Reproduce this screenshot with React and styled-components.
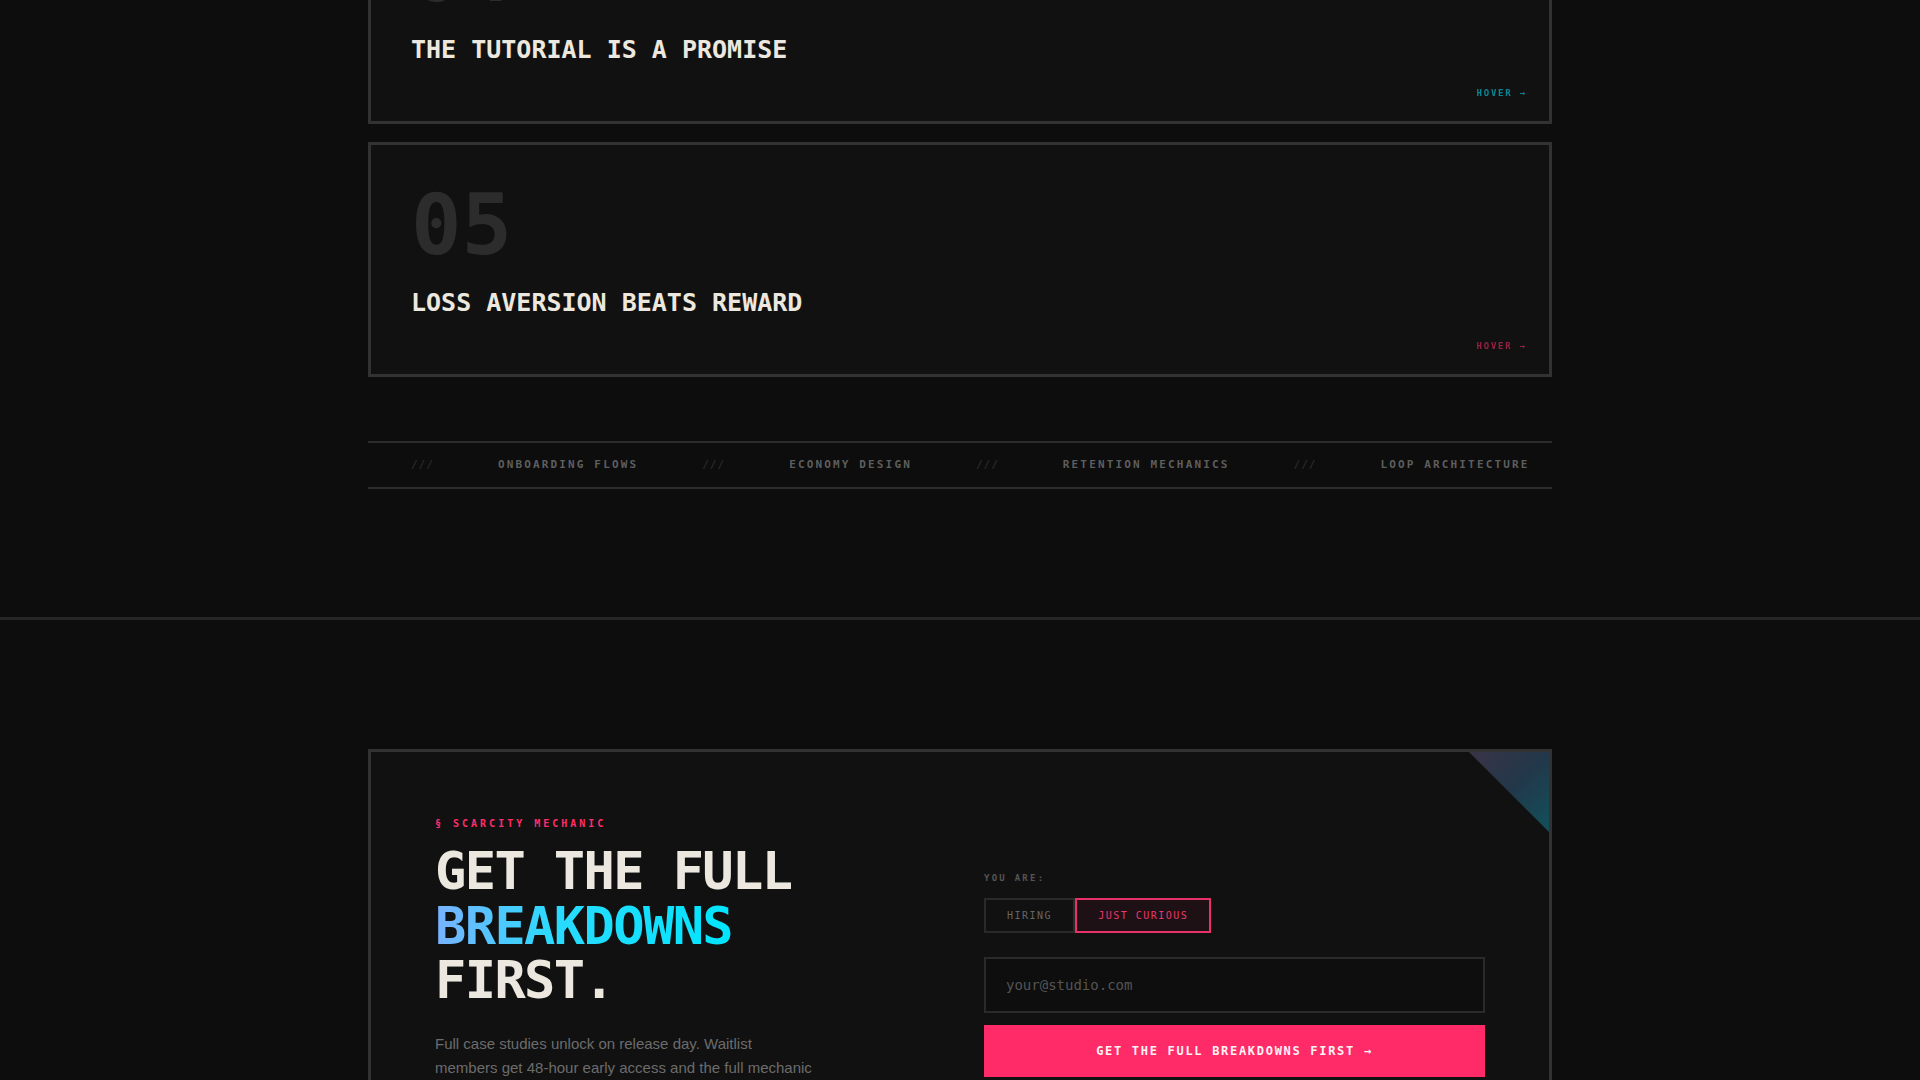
import React, { useState } from "react";
import styled, { createGlobalStyle } from "styled-components";

const mono = `"DejaVu Sans Mono", "Liberation Mono", monospace`;
const sans = `"Liberation Sans", Arial, sans-serif`;

const accents = {
  teal: "#00e5ff",
  pink: "#ff2d6b",
};

const GlobalStyle = createGlobalStyle`
  * { box-sizing: border-box; }
  html, body { margin: 0; padding: 0; background: #0d0d0d; }
  body { font-family: ${mono}; color: #ece8df; }
`;

const Viewport = styled.div`
  height: 100vh;
  overflow: hidden;
`;

/* the page is shown scrolled down a little */
const Scrolled = styled.div`
  margin-top: -111px;
`;

const Section = styled.section`
  padding: 0 0 128px;
`;

const CtaSection = styled.section`
  border-top: 3px solid #262626;
  padding: 129px 0;
`;

const Container = styled.div`
  max-width: 1184px;
  margin: 0 auto;
`;

const CardList = styled.div`
  display: flex;
  flex-direction: column;
  gap: 18px;
`;

const LessonCard = styled.article`
  position: relative;
  background: #111111;
  border: 3px solid #323232;
  padding: 38px 40px 56px;
`;

const Num = styled.div`
  font-family: ${mono};
  font-size: 84px;
  line-height: 1;
  font-weight: 700;
  color: #2c2c2c;
`;

const CardTitle = styled.h3`
  margin: 21px 0 0;
  font-family: ${mono};
  font-size: 25px;
  line-height: 30px;
  font-weight: 700;
  color: #ece8df;
`;

const HoverTag = styled.span`
  position: absolute;
  right: 22px;
  bottom: 22px;
  font-size: 9px;
  line-height: 11px;
  font-weight: 700;
  letter-spacing: 0.2em;
  color: ${({ $accent }) => accents[$accent]};
  opacity: 0.55;
`;

const Ticker = styled.div`
  margin-top: 64px;
  border-top: 2px solid #2c2c2c;
  border-bottom: 2px solid #2c2c2c;
  padding: 14px 0 14px 43px;
  overflow: hidden;
`;

const Track = styled.div`
  display: flex;
  gap: 64px;
  white-space: nowrap;
`;

const TickSep = styled.span`
  font-size: 11px;
  line-height: 16px;
  letter-spacing: 1px;
  color: #2a2a2a;
  font-weight: 700;
`;

const TickLabel = styled.span`
  font-size: 11px;
  line-height: 16px;
  letter-spacing: 2.15px;
  color: #5e5e5e;
  font-weight: 700;
`;

const CtaCard = styled.div`
  position: relative;
  background: #111111;
  border: 3px solid #323232;
  padding: 64px;
  display: grid;
  grid-template-columns: 1fr 1fr;
  gap: 48px;
`;

const Corner = styled.div`
  position: absolute;
  top: 0;
  right: 0;
  width: 80px;
  height: 80px;
  background: linear-gradient(135deg, #3a3346 0%, #22384a 50%, #12505a 100%);
  clip-path: polygon(0 0, 100% 0, 100% 100%);
`;

const Left = styled.div`
  display: flex;
  flex-direction: column;
`;

const Kicker = styled.div`
  font-size: 10px;
  line-height: 15px;
  letter-spacing: 3px;
  font-weight: 700;
  color: ${accents.pink};
`;

const Headline = styled.h2`
  margin: 13px 0 0;
  font-family: ${mono};
  font-size: 52px;
  line-height: 1.05;
  letter-spacing: -1.6px;
  font-weight: 700;
  color: #ece8df;
`;

const Line = styled.span`
  display: block;
`;

const GradLine = styled(Line)`
  background: linear-gradient(90deg, #7ab2ff 0%, #2adbff 40%, #00e5ff 100%);
  -webkit-background-clip: text;
  background-clip: text;
  color: transparent;
  width: fit-content;
`;

const Lead = styled.p`
  margin: 24px 0 0;
  max-width: 380px;
  font-family: ${sans};
  font-size: 15px;
  line-height: 24px;
  color: #6c6c6c;
`;

const Form = styled.form`
  padding-top: 56px;
  display: flex;
  flex-direction: column;
`;

const FieldLabel = styled.div`
  font-size: 9px;
  line-height: 13.5px;
  letter-spacing: 0.25em;
  color: #555;
  font-weight: 700;
`;

const Toggles = styled.div`
  display: flex;
  margin-top: 12px;
`;

const Toggle = styled.button`
  font-family: ${mono};
  font-size: 10px;
  line-height: 15px;
  letter-spacing: 1.5px;
  padding: 8px 21px;
  cursor: pointer;
  background: ${({ $active }) => ($active ? "#1e1116" : "transparent")};
  border: 2px solid ${({ $active }) => ($active ? "#e8306a" : "#2a2a2a")};
  color: ${({ $active }) => ($active ? "#e8386c" : "#666")};
`;

const EmailInput = styled.input`
  margin-top: 24px;
  width: 100%;
  font-family: ${mono};
  font-size: 14px;
  line-height: 16px;
  padding: 18px 20px;
  background: #0e0e0e;
  border: 2px solid #2a2a2a;
  color: #ece8df;
  outline: none;
  &::placeholder {
    color: #545454;
  }
`;

const Submit = styled.button`
  margin-top: 12px;
  width: 100%;
  font-family: ${mono};
  font-size: 12px;
  line-height: 16px;
  letter-spacing: 1.7px;
  font-weight: 700;
  padding: 18px 20px;
  background: #ff2a68;
  color: #fff4f4;
  border: none;
  cursor: pointer;
`;

const Note = styled.div`
  margin-top: 16px;
  font-size: 10px;
  letter-spacing: 0.15em;
  color: #444;
`;

const lessons = [
  { n: "04", title: "THE TUTORIAL IS A PROMISE", accent: "teal" },
  { n: "05", title: "LOSS AVERSION BEATS REWARD", accent: "pink" },
];

const topics = [
  "ONBOARDING FLOWS",
  "ECONOMY DESIGN",
  "RETENTION MECHANICS",
  "LOOP ARCHITECTURE",
];

export default function App() {
  const [role, setRole] = useState("curious");

  return (
    <Viewport>
      <GlobalStyle />
      <Scrolled>
        <Section>
          <Container>
            <CardList>
              {lessons.map((l) => (
                <LessonCard key={l.n}>
                  <Num>{l.n}</Num>
                  <CardTitle>{l.title}</CardTitle>
                  <HoverTag $accent={l.accent}>HOVER →</HoverTag>
                </LessonCard>
              ))}
            </CardList>
            <Ticker>
              <Track>
                {topics.map((t, i) => (
                  <React.Fragment key={i}>
                    <TickSep>///</TickSep>
                    <TickLabel>{t}</TickLabel>
                  </React.Fragment>
                ))}
              </Track>
            </Ticker>
          </Container>
        </Section>

        <CtaSection>
          <Container>
            <CtaCard>
              <Corner />
              <Left>
                <Kicker>§ SCARCITY MECHANIC</Kicker>
                <Headline>
                  <Line>GET THE FULL</Line>
                  <GradLine>BREAKDOWNS</GradLine>
                  <Line>FIRST.</Line>
                </Headline>
                <Lead>
                  Full case studies unlock on release day. Waitlist members get
                  48-hour early access and the full mechanic library before
                  anyone else.
                </Lead>
              </Left>
              <Form onSubmit={(e) => e.preventDefault()}>
                <FieldLabel>YOU ARE:</FieldLabel>
                <Toggles>
                  <Toggle
                    type="button"
                    $active={role === "hiring"}
                    onClick={() => setRole("hiring")}
                  >
                    HIRING
                  </Toggle>
                  <Toggle
                    type="button"
                    $active={role === "curious"}
                    onClick={() => setRole("curious")}
                  >
                    JUST CURIOUS
                  </Toggle>
                </Toggles>
                <EmailInput type="email" placeholder="your@studio.com" />
                <Submit type="submit">GET THE FULL BREAKDOWNS FIRST →</Submit>
                <Note>NO SPAM. ONE EMAIL ON LAUNCH.</Note>
              </Form>
            </CtaCard>
          </Container>
        </CtaSection>
      </Scrolled>
    </Viewport>
  );
}
